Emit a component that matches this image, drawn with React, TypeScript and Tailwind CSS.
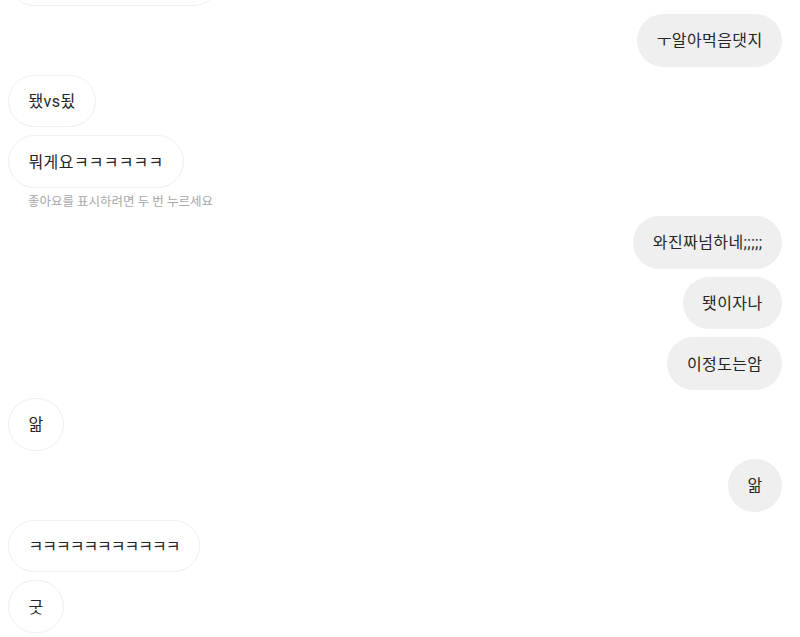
type Message = {
  id: number;
  text: string;
  mine?: boolean;
  hint?: string;
  width?: string;
  looseLaugh?: boolean;
};

const messages: Message[] = [
  { id: 0, text: '', width: 'w-[212px]' },
  { id: 1, text: 'ㅜ알아먹음댓지', mine: true },
  { id: 2, text: '됐vs됬' },
  { id: 3, text: '뭐게요ㅋㅋㅋㅋㅋㅋ', hint: '좋아요를 표시하려면 두 번 누르세요', looseLaugh: true },
  { id: 4, text: '와진짜넘하네;;;;;', mine: true },
  { id: 5, text: '됏이자나', mine: true },
  { id: 6, text: '이정도는암', mine: true },
  { id: 7, text: '앎' },
  { id: 8, text: '앎', mine: true },
  { id: 9, text: 'ㅋㅋㅋㅋㅋㅋㅋㅋㅋㅋㅋ' },
  { id: 10, text: '굿' },
];

// runs of ㅋ sit tighter than full syllables
function MessageText({ text, loose }: { text: string; loose?: boolean }) {
  const parts = text.split(/(ㅋ+)/).filter(Boolean);
  return (
    <span className="tracking-[0.4px]">
      {parts.map((p, i) =>
        p.startsWith('ㅋ') ? (
          <span key={i} className={loose ? 'tracking-[0.2px]' : 'tracking-[-1px]'}>
            {p}
          </span>
        ) : (
          <span key={i}>{p}</span>
        ),
      )}
    </span>
  );
}

function Bubble({ msg }: { msg: Message }) {
  const base =
    'h-[52.7px] flex items-center justify-center rounded-full px-[19.5px] pt-[2px] text-[16px] leading-none text-[#262626] whitespace-nowrap';
  return (
    <div className={msg.mine ? 'flex justify-end' : 'flex justify-start'}>
      {msg.mine ? (
        <div className={`${base} bg-[#efefef]`}>
          <MessageText text={msg.text} loose={msg.looseLaugh} />
        </div>
      ) : (
        <div className={`${base} bg-white border border-[#efefef] ${msg.width ?? ''}`}>
          <MessageText text={msg.text} loose={msg.looseLaugh} />
        </div>
      )}
    </div>
  );
}

export default function App() {
  return (
    <div
      className="h-screen w-full overflow-hidden bg-white"
      style={{ fontFamily: 'Roboto, "Noto Sans CJK KR", "Noto Sans", sans-serif' }}
    >
      <div className="-mt-[46.7px] flex flex-col gap-2 pl-2 pr-[18px]">
        {messages.map((m) => (
          <div key={m.id} className="contents">
            <Bubble msg={m} />
            {m.hint && (
              <div className="h-[12px] pl-5 text-[12.5px] leading-[12px] text-[#a8a8a8]">{m.hint}</div>
            )}
          </div>
        ))}
      </div>
    </div>
  );
}
